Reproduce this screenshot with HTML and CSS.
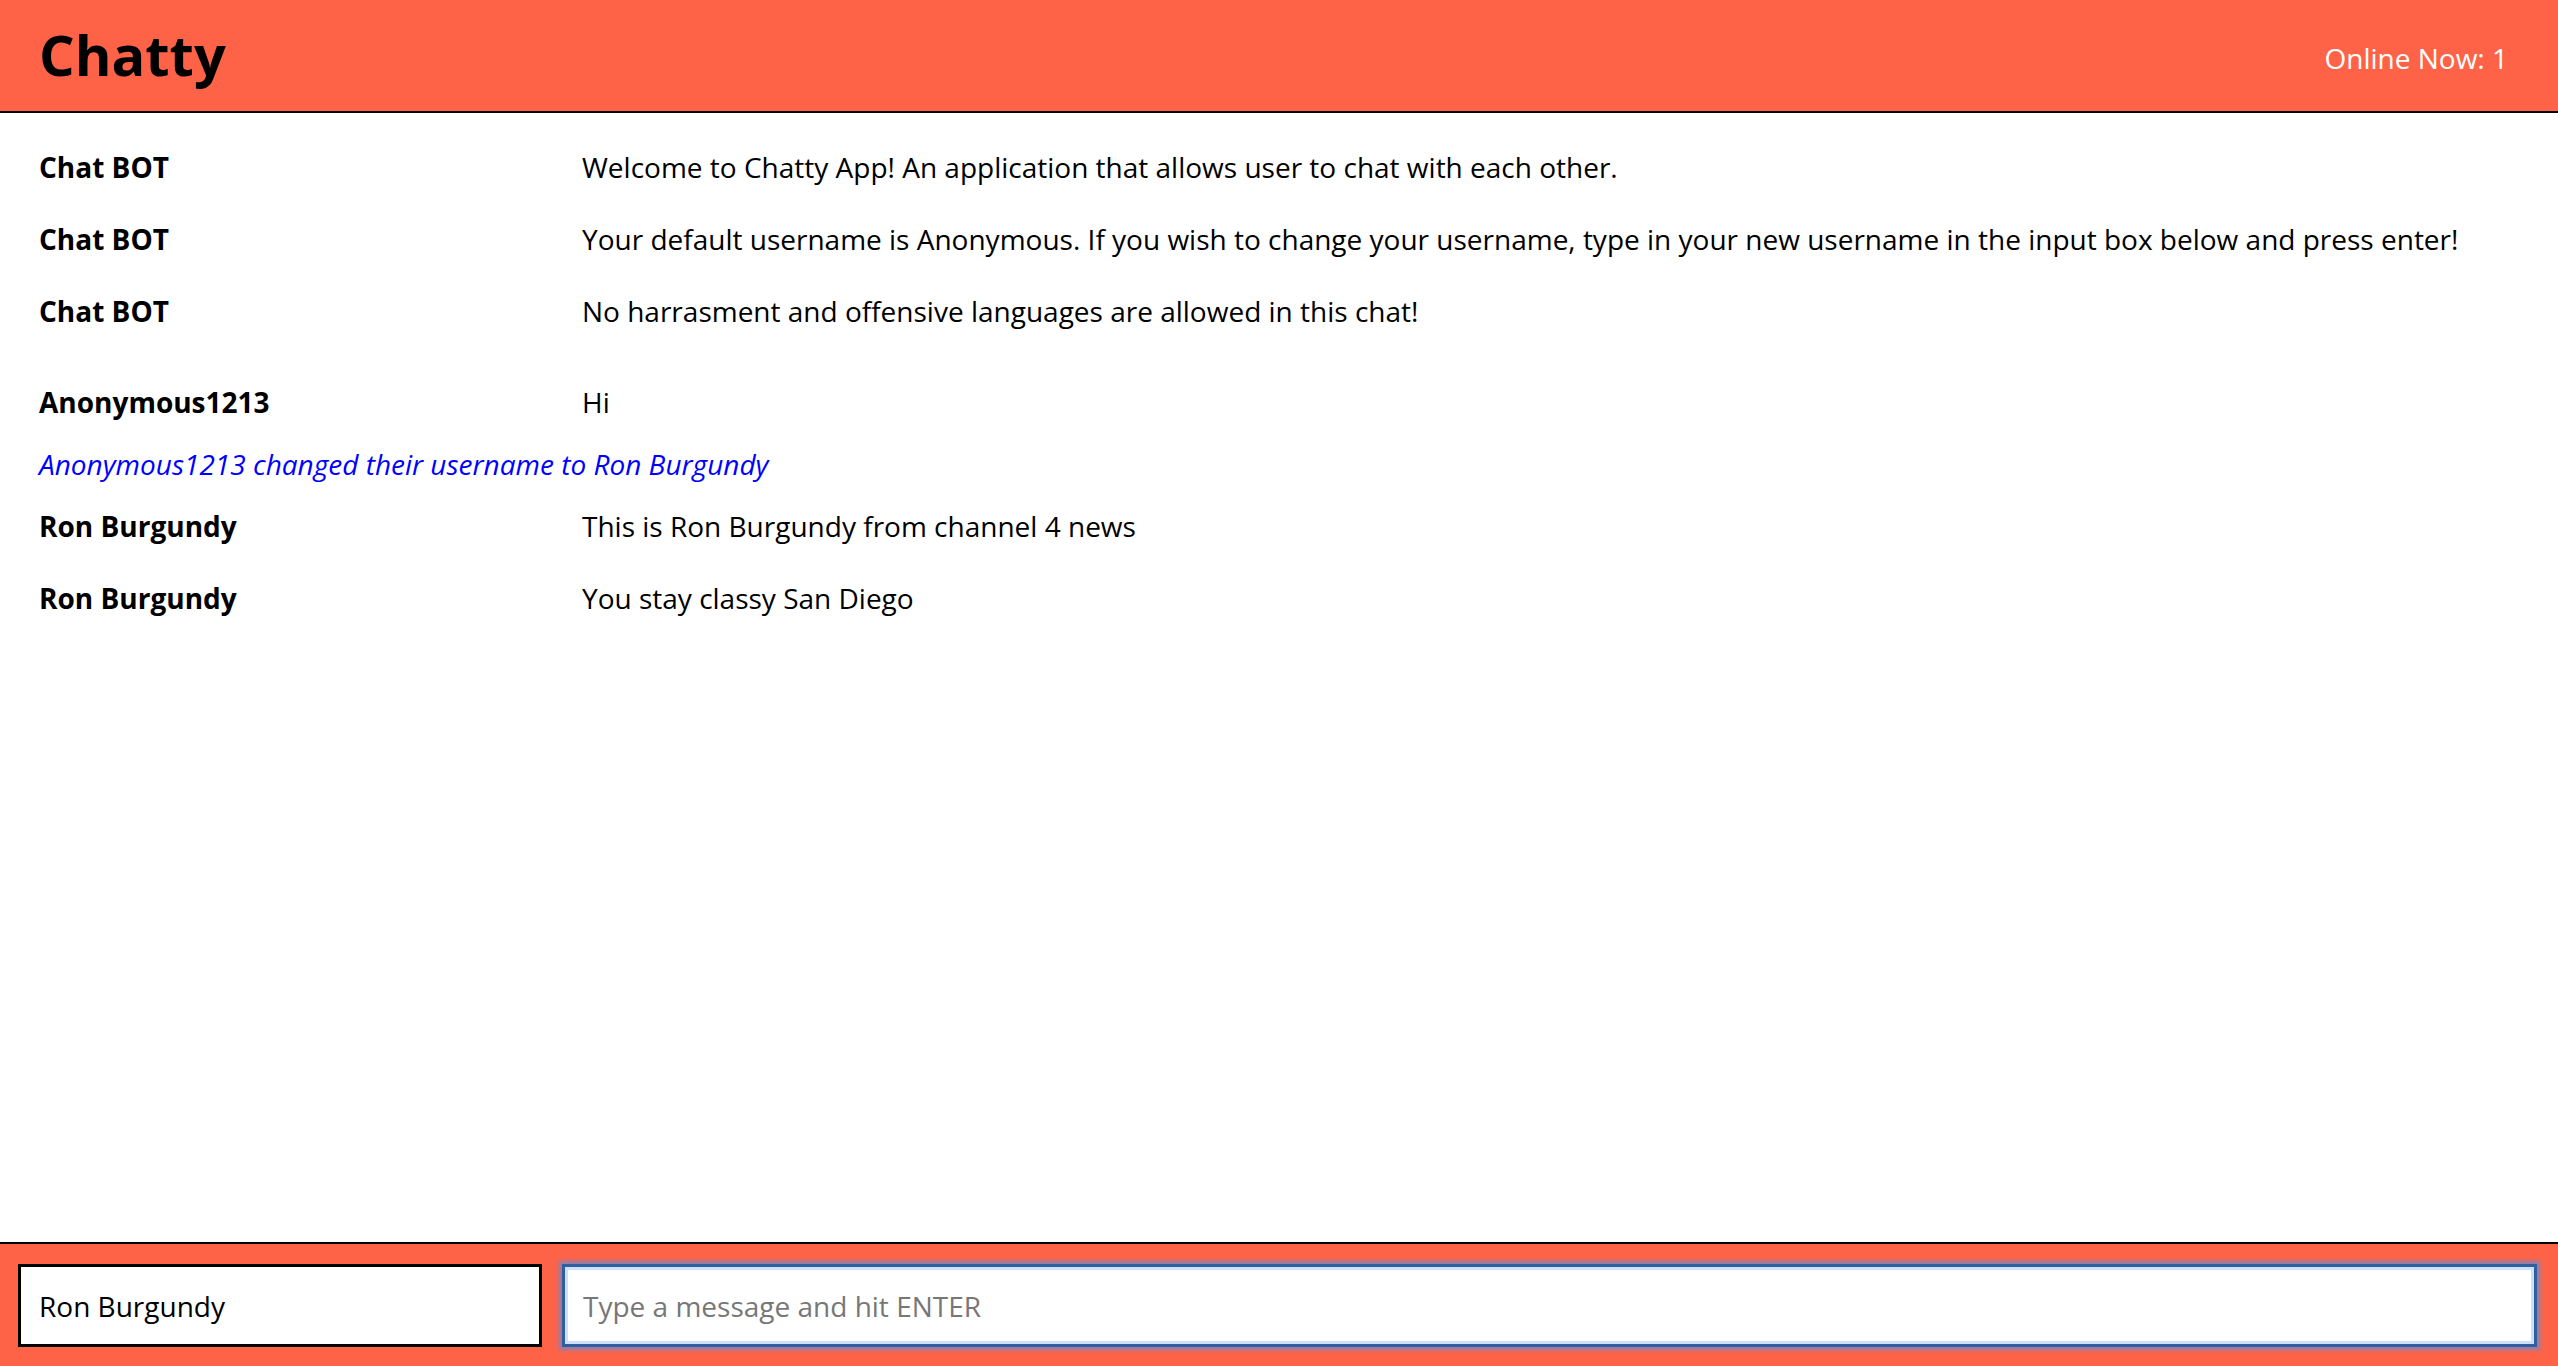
FILE: index.html
```html
<!DOCTYPE html>
<html lang="en">
<head>
<meta charset="utf-8">
<title>Chatty</title>
<link rel="stylesheet" href="styles.css">
</head>
<body>
<div class="app">
  <nav class="navbar">
    <a class="navbar-brand" href="#">Chatty</a>
    <span class="online-count">Online Now: 1</span>
  </nav>
  <main class="messages">
    <div class="message">
      <span class="message-username">Chat BOT</span>
      <span class="message-content">Welcome to Chatty App! An application that allows user to chat with each other.</span>
    </div>
    <div class="message">
      <span class="message-username">Chat BOT</span>
      <span class="message-content">Your default username is Anonymous. If you wish to change your username, type in your new username in the input box below and press enter!</span>
    </div>
    <div class="message">
      <span class="message-username">Chat BOT</span>
      <span class="message-content">No harrasment and offensive languages are allowed in this chat!</span>
    </div>
    <div class="message message-new-group">
      <span class="message-username">Anonymous1213</span>
      <span class="message-content">Hi</span>
    </div>
    <div class="message message-system">Anonymous1213 changed their username to Ron Burgundy</div>
    <div class="message message-after-system">
      <span class="message-username">Ron Burgundy</span>
      <span class="message-content">This is Ron Burgundy from channel 4 news</span>
    </div>
    <div class="message">
      <span class="message-username">Ron Burgundy</span>
      <span class="message-content">You stay classy San Diego</span>
    </div>
  </main>
  <footer class="chatbar">
    <input class="chatbar-username" type="text" value="Ron Burgundy">
    <input class="chatbar-message" type="text" placeholder="Type a message and hit ENTER">
  </footer>
</div>
</body>
</html>
```

FILE: styles.css
```css
html, body {
  margin: 0;
  padding: 0;
  height: 100%;
}

body {
  font-family: "Open Sans", "Liberation Sans", sans-serif;
  font-size: 28px;
  color: #000;
  background: #fff;
}

.app {
  display: flex;
  flex-direction: column;
  height: 100vh;
}

.navbar {
  flex: 0 0 auto;
  height: 111px;
  display: flex;
  align-items: center;
  justify-content: space-between;
  padding: 0 50px 0 39px;
  background: #ff6347;
  border-bottom: 2px solid #000;
}

.navbar-brand {
  font-size: 56px;
  font-weight: 700;
  color: #000;
  text-decoration: none;
  line-height: 1;
  margin-top: -4px;
}

.online-count {
  color: #fff;
  font-size: 28px;
  line-height: 38px;
  margin-top: 4px;
}

.messages {
  flex: 1 1 auto;
  display: flex;
  flex-direction: column;
  padding: 35px 39px 0 39px;
  overflow: hidden;
}

.message {
  display: flex;
  line-height: 38px;
  margin-top: 34px;
}

.message:first-child {
  margin-top: 0;
}

.message-new-group {
  margin-top: 53px;
}

.message-system,
.message-after-system {
  margin-top: 24px;
}

.message-system {
  color: #0000ff;
  font-style: italic;
}

.message-username {
  flex: 0 0 543px;
  font-weight: 700;
}

.message-content {
  flex: 1 1 auto;
}

.chatbar {
  flex: 0 0 auto;
  display: flex;
  gap: 20px;
  padding: 20px 21px 19px 18px;
  background: #ff6347;
  border-top: 2px solid #000;
}

.chatbar input {
  box-sizing: border-box;
  height: 83px;
  margin: 0;
  font-family: "Open Sans", "Liberation Sans", sans-serif;
  font-size: 28px;
  color: #000;
  background: #fff;
  outline: none;
}

.chatbar-username {
  flex: 0 0 524px;
  border: 3px solid #000;
  padding: 0 18px;
}

.chatbar-message {
  flex: 1 1 auto;
  border: 3px solid #2f5f9f;
  padding: 0 18px;
  box-shadow: inset 0 0 0 3px #cbe0fa, 0 0 4px 3px rgba(95, 140, 215, 0.75);
}

.chatbar-message::placeholder {
  color: #777;
}
```
